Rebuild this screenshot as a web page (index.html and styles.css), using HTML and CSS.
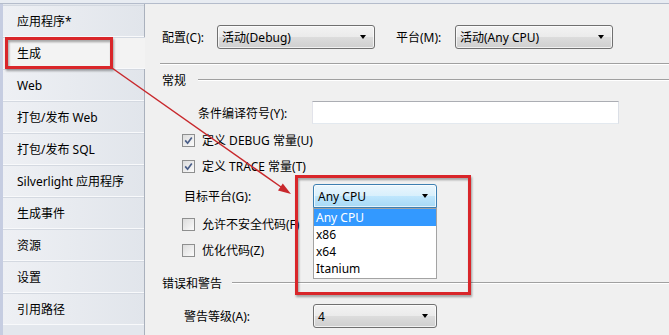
FILE: index.html
```html
<!DOCTYPE html>
<html lang="zh-CN">
<head>
<meta charset="utf-8">
<title>生成</title>
<link rel="stylesheet" href="styles.css">
</head>
<body>
<div class="window">
  <nav class="sidebar">
    <div class="tab">应用程序*</div>
    <div class="tab selected">生成</div>
    <div class="tab">Web</div>
    <div class="tab">打包/发布 Web</div>
    <div class="tab">打包/发布 SQL</div>
    <div class="tab">Silverlight 应用程序</div>
    <div class="tab">生成事件</div>
    <div class="tab">资源</div>
    <div class="tab">设置</div>
    <div class="tab">引用路径</div>
  </nav>
  <main class="content">
    <div class="row top-row">
      <span class="lbl lbl-config">配置(C):</span>
      <div class="combo w158"><span>活动(Debug)</span><i class="arrow"></i></div>
      <span class="lbl lbl-platform">平台(M):</span>
      <div class="combo w158"><span>活动(Any CPU)</span><i class="arrow"></i></div>
    </div>
    <div class="sep"></div>
    <div class="group-head general"><span>常规</span><div class="line"></div></div>
    <div class="row field-row symbols">
      <span class="lbl lbl-symbols">条件编译符号(Y):</span>
      <div class="textbox"></div>
    </div>
    <div class="row check-row">
      <span class="check checked"><svg viewBox="0 0 13 13" width="13" height="13"><path d="M3.2 6.4 L5.6 9.2 L9.8 3.4" fill="none" stroke="#4a5e88" stroke-width="1.7"/></svg></span>
      <span>定义 DEBUG 常量(U)</span>
    </div>
    <div class="row check-row">
      <span class="check checked"><svg viewBox="0 0 13 13" width="13" height="13"><path d="M3.2 6.4 L5.6 9.2 L9.8 3.4" fill="none" stroke="#4a5e88" stroke-width="1.7"/></svg></span>
      <span>定义 TRACE 常量(T)</span>
    </div>
    <div class="row field-row target">
      <span class="lbl lbl-field">目标平台(G):</span>
      <div class="combo w124 open"><span>Any CPU</span><i class="arrow"></i>
        <ul class="dropdown">
          <li class="sel">Any CPU</li>
          <li>x86</li>
          <li>x64</li>
          <li>Itanium</li>
        </ul>
      </div>
    </div>
    <div class="row check-row unsafe">
      <span class="check"></span>
      <span>允许不安全代码(F)</span>
    </div>
    <div class="row check-row">
      <span class="check"></span>
      <span>优化代码(Z)</span>
    </div>
    <div class="group-head errors"><span>错误和警告</span><div class="line"></div></div>
    <div class="row field-row warn">
      <span class="lbl lbl-field">警告等级(A):</span>
      <div class="combo w124"><span>4</span><i class="arrow"></i></div>
    </div>
  </main>
</div>
<svg class="annot" width="669" height="335" viewBox="0 0 669 335">
  <defs>
    <filter id="sh" x="-10%" y="-10%" width="120%" height="130%">
      <feDropShadow dx="1" dy="2" stdDeviation="1.2" flood-color="#000" flood-opacity="0.35"/>
    </filter>
  </defs>
  <g filter="url(#sh)" fill="none" stroke="#d9252b" stroke-width="3">
    <rect x="6.5" y="38.5" width="105" height="29"/>
    <rect x="296.5" y="176.5" width="173" height="117"/>
  </g>
  <line x1="112" y1="68" x2="281" y2="187" stroke="#c8282c" stroke-width="1.5"/>
  <polygon points="291,194 278,190.6 282.8,183.6" fill="#c8282c"/>
</svg>
</body>
</html>
```
FILE: styles.css
```css
html, body {
  margin: 0;
  padding: 0;
}
body {
  width: 669px;
  height: 335px;
  overflow: hidden;
  position: relative;
  background: #e8ecf2;
  font-family: "Noto Sans", "Noto Sans CJK SC", sans-serif;
  font-size: 12px;
  color: #000;
}
.window {
  display: flex;
  margin-top: 3px;
  height: 331px;
  border-top: 1px solid #b4bccb;
}
.sidebar {
  width: 141px;
  border-left: 3px solid #c6cde1;
  border-right: 1px solid #aab1bd;
  padding-top: 1px;
  display: flex;
  flex-direction: column;
  background: #e3e7ed;
}
.tab {
  height: 32px;
  box-sizing: border-box;
  padding-left: 14px;
  display: flex;
  align-items: center;
  background: linear-gradient(to right, #eef0f4, #e1e5eb);
  border-top: 1px solid #d4d9e1;
  border-bottom: 1px solid #f8f9fb;
  white-space: nowrap;
}
.tab.selected {
  background: #f3f3f3;
  margin-right: -1px;
  position: relative;
  z-index: 1;
}
.content {
  flex: 1;
  background: #f0f0f0;
  padding-top: 21px;
  position: relative;
}
.row {
  display: flex;
  align-items: center;
}
.top-row {
  height: 24px;
  margin-left: 17px;
}
.lbl {
  white-space: nowrap;
}
.lbl-config { width: 55px; }
.lbl-platform { width: 59px; margin-left: 21px; }
.combo {
  position: relative;
  box-sizing: border-box;
  height: 24px;
  border: 1px solid #707070;
  border-radius: 3px;
  background: linear-gradient(to bottom, #f3f3f3 0%, #ebebeb 48%, #dcdcdc 52%, #cfcfcf 100%);
  box-shadow: inset 0 0 0 1px rgba(255,255,255,0.7);
  display: flex;
  align-items: center;
  padding-left: 4px;
}
.w158 { width: 158px; }
.w124 { width: 124px; }
.arrow {
  position: absolute;
  right: 8px;
  top: 9px;
  width: 0;
  height: 0;
  border-left: 3.5px solid transparent;
  border-right: 3.5px solid transparent;
  border-top: 4px solid #000;
}
.combo.open {
  border-color: #3c7fb1;
  background: linear-gradient(to bottom, #eaf6fd 0%, #d9f0fc 48%, #bee6fd 52%, #a7d9f5 100%);
  border-radius: 3px 3px 0 0;
}
.dropdown {
  position: absolute;
  left: -1px;
  top: 23px;
  width: 124px;
  margin: 0;
  padding: 0;
  list-style: none;
  background: #fff;
  border: 1px solid #a3a3a3;
  box-sizing: border-box;
  height: 71px;
  z-index: 2;
}
.dropdown li {
  height: 17px;
  line-height: 17px;
  padding-left: 2px;
}
.dropdown li.sel {
  background: #3399ff;
  color: #fff;
}
.sep {
  margin-left: 15px;
  margin-top: 14px;
  border-top: 1px solid #a0a0a0;
  border-bottom: 1px solid #fff;
}
.group-head {
  display: flex;
  align-items: center;
  height: 16px;
  margin-left: 17px;
  margin-top: 7px;
}
.group-head .line {
  flex: 1;
  border-top: 1px solid #a0a0a0;
  border-bottom: 1px solid #fff;
}
.general .line { margin-left: 12px; }
.errors { margin-top: 12px; }
.errors .line { margin-left: 10px; }
.field-row {
  height: 23px;
}
.symbols {
  margin-left: 53px;
  margin-top: 13px;
}
.lbl-symbols { width: 114px; }
.textbox {
  width: 307px;
  height: 23px;
  box-sizing: border-box;
  background: #fff;
  border: 1px solid;
  border-color: #abadb3 #dbdfe6 #e3e9ef #e2e3ea;
}
.check-row {
  height: 26px;
  margin-left: 37px;
  gap: 7px;
}
.check-row:first-of-type { margin-top: 3px; }
.symbols + .check-row { margin-top: 3px; }
.check {
  width: 13px;
  height: 13px;
  box-sizing: border-box;
  border: 1px solid #8e8f8f;
  background: linear-gradient(135deg, #dcdcdc, #fbfbfb);
  position: relative;
  display: block;
}
.check svg {
  position: absolute;
  left: -1px;
  top: -1px;
}
.target {
  height: 24px;
  margin-left: 39px;
  margin-top: 5px;
}
.lbl-field { width: 129px; }
.unsafe { margin-top: 3px; }
.warn {
  height: 24px;
  margin-left: 39px;
  margin-top: 13px;
}
.annot {
  position: absolute;
  left: 0;
  top: 0;
  pointer-events: none;
  z-index: 5;
}
```
